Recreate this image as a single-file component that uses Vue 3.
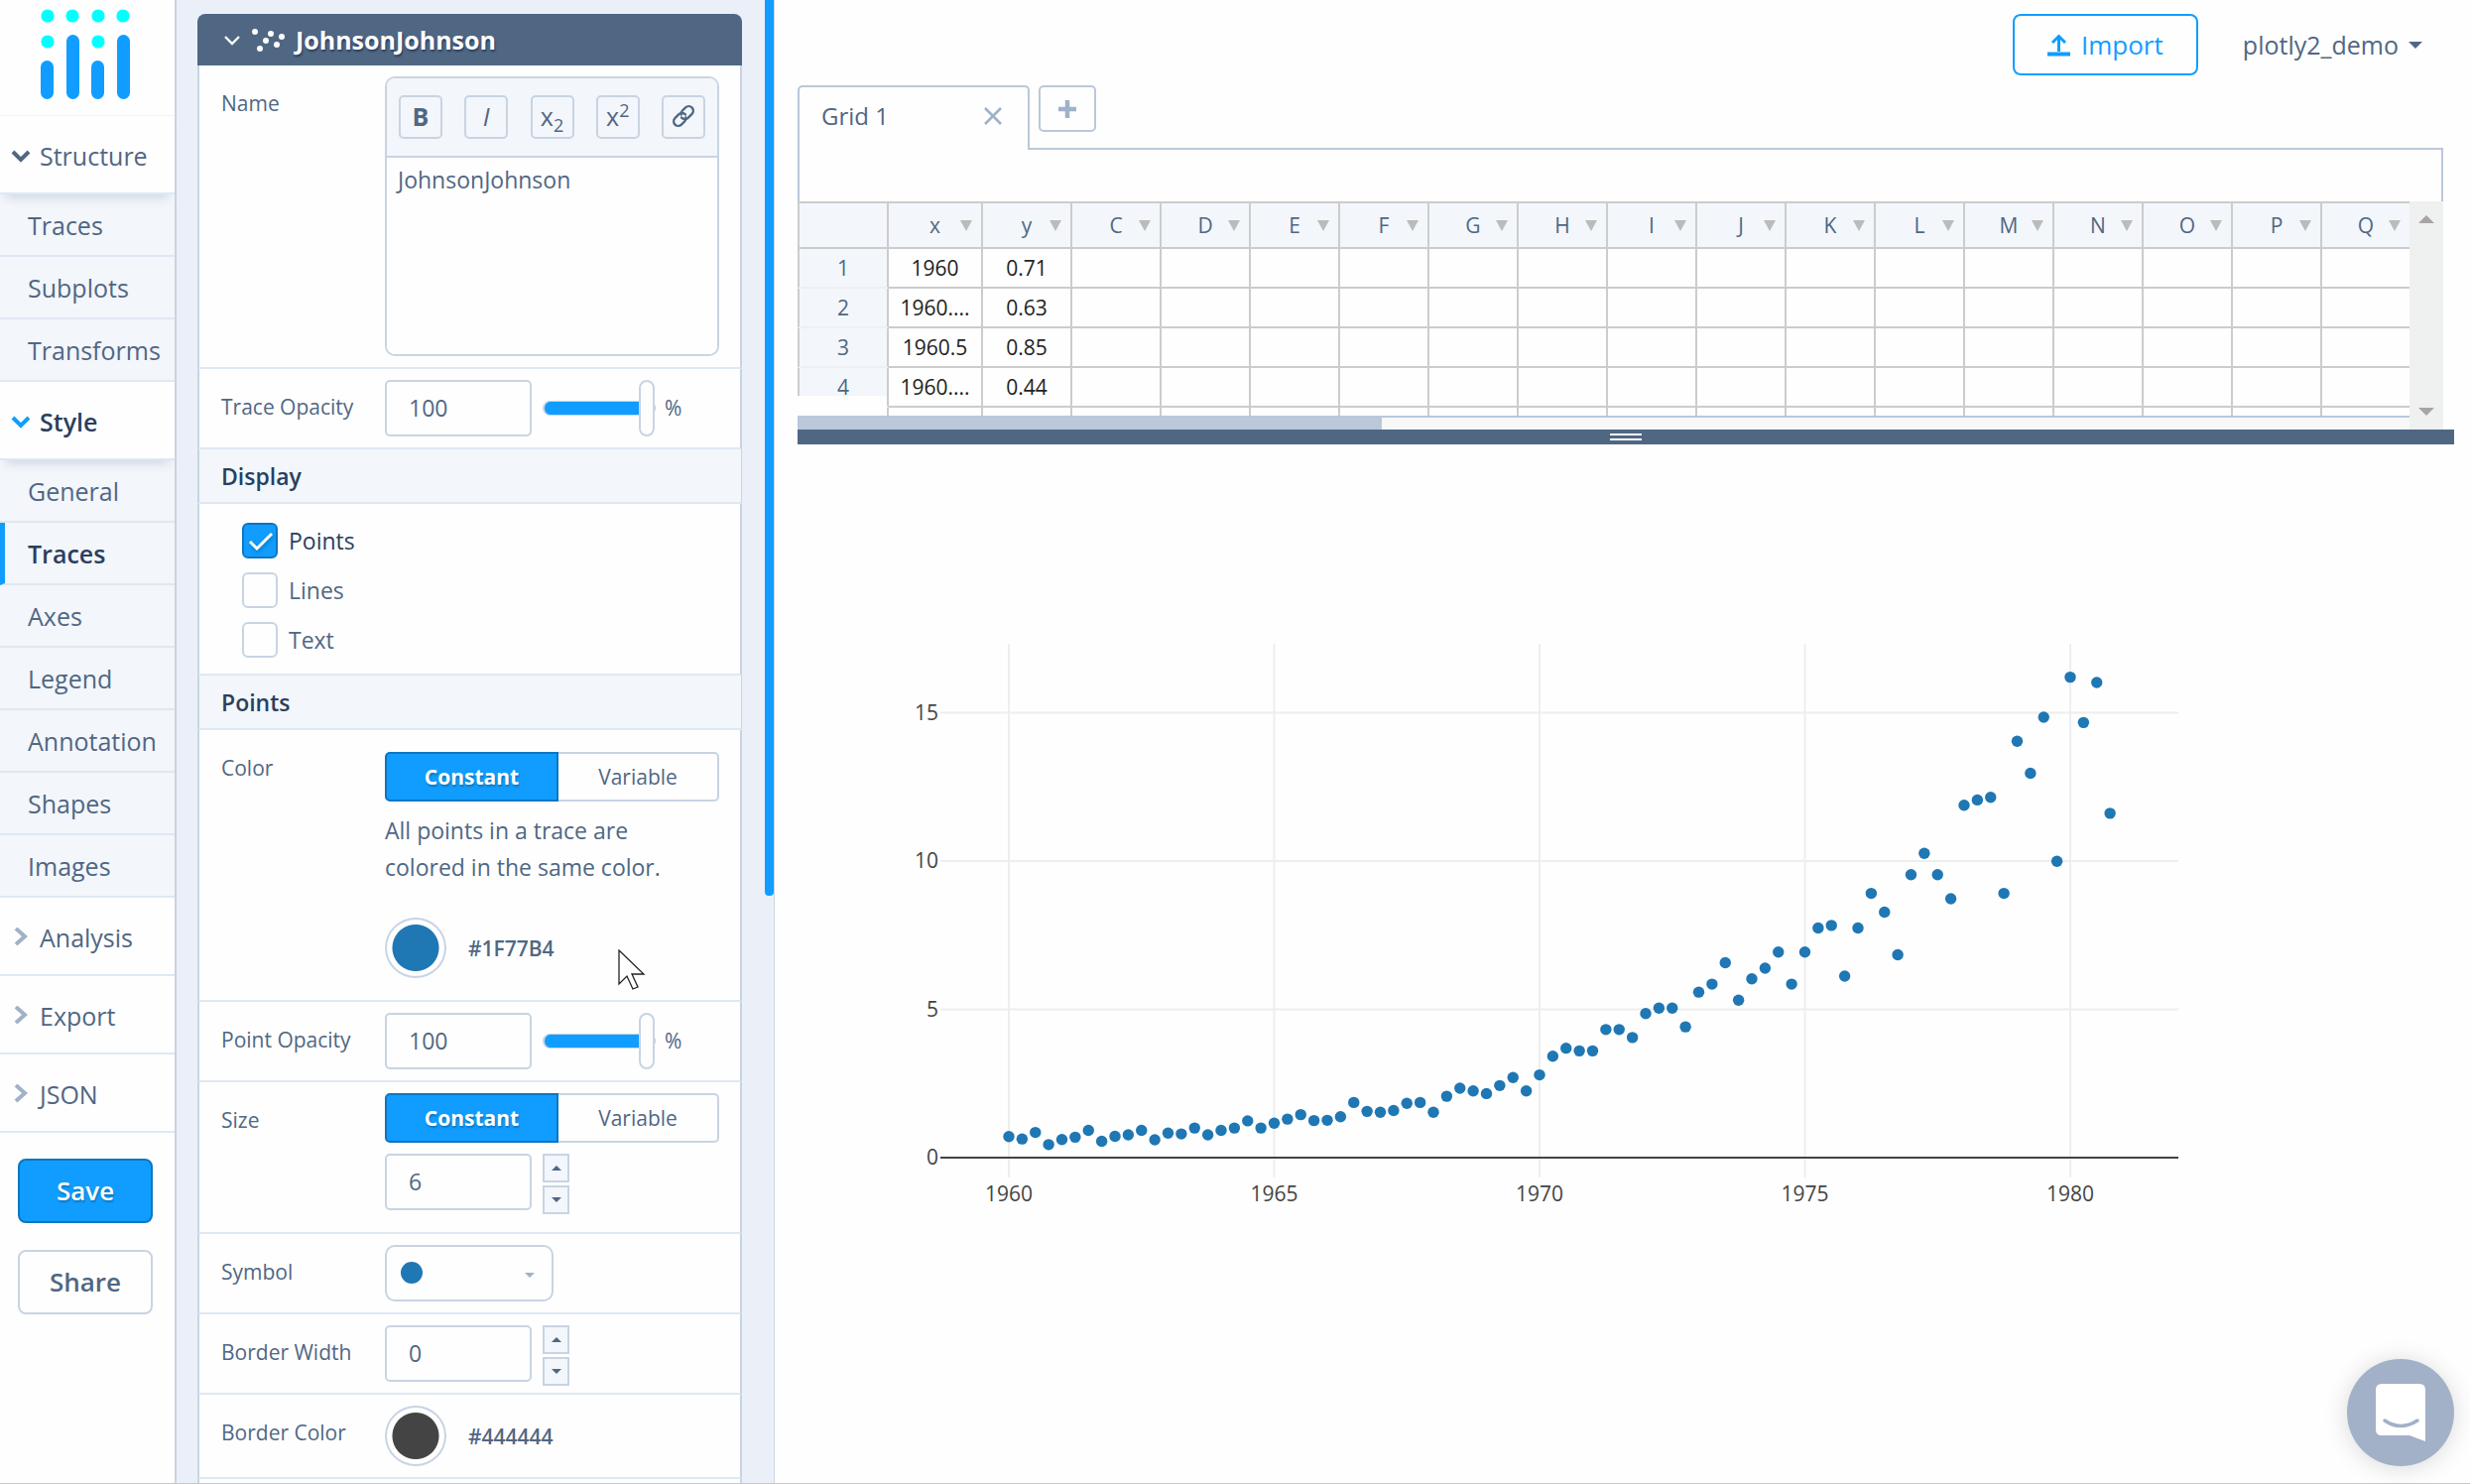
<script setup>
import { ref } from 'vue'

const structureItems = ['Traces', 'Subplots', 'Transforms']
const styleItems = ['General', 'Traces', 'Axes', 'Legend', 'Annotation', 'Shapes', 'Images']
const closedSections = ['Analysis', 'Export', 'JSON']

const traceName = ref('JohnsonJohnson')
const traceOpacity = ref(100)
const pointOpacity = ref(100)
const pointSize = ref('6')
const borderWidth = ref('0')
const display = ref([
  { name: 'Points', on: true },
  { name: 'Lines', on: false },
  { name: 'Text', on: false }
])

const columns = ['x', 'y', ...'CDEFGHIJKLMNOPQ']
const gridRows = [
  { label: '1', cells: ['1960', '0.71'] },
  { label: '2', cells: ['1960....', '0.63'] },
  { label: '3', cells: ['1960.5', '0.85'] },
  { label: '4', cells: ['1960....', '0.44'] },
  { label: '', cells: [] }
]

// Quarterly earnings per share, starting in the first quarter of 1960
const earnings = [
  0.71, 0.63, 0.85, 0.44, 0.61, 0.69, 0.92, 0.55, 0.72, 0.77, 0.92, 0.6,
  0.83, 0.8, 1, 0.77, 0.92, 1, 1.24, 1, 1.16, 1.3, 1.45, 1.25,
  1.26, 1.38, 1.86, 1.56, 1.53, 1.59, 1.83, 1.86, 1.53, 2.07, 2.34, 2.25,
  2.16, 2.43, 2.7, 2.25, 2.79, 3.42, 3.69, 3.6, 3.6, 4.32, 4.32, 4.05,
  4.86, 5.04, 5.04, 4.41, 5.58, 5.85, 6.57, 5.31, 6.03, 6.39, 6.93, 5.85,
  6.93, 7.74, 7.83, 6.12, 7.74, 8.91, 8.28, 6.84, 9.54, 10.26, 9.54, 8.73,
  11.88, 12.06, 12.15, 8.91, 14.04, 12.96, 14.85, 9.99, 16.2, 14.67, 16.02, 11.61
]
const xPos = (year) => 213 + (year - 1960) * 53.5
const yPos = (value) => 719 - value * 29.9
const points = earnings.map((v, i) => ({ x: xPos(1960 + i / 4), y: yPos(v) }))
const years = [1960, 1965, 1970, 1975, 1980]
const levels = [5, 10, 15]
</script>

<template>
  <div class="app">
    <nav class="sidebar">
      <div class="logo">
        <svg width="92" height="92" viewBox="0 0 92 92" aria-label="Plotly">
          <g fill="#0ff">
            <circle cx="7" cy="7" r="6.6" /><circle cx="32" cy="7" r="6.6" />
            <circle cx="58" cy="7" r="6.6" /><circle cx="83" cy="7" r="6.6" />
            <circle cx="7" cy="33" r="6.6" /><circle cx="58" cy="33" r="6.6" />
          </g>
          <g fill="#119dff">
            <rect x="0" y="52" width="13" height="39" rx="6.5" />
            <rect x="26" y="26" width="13" height="65" rx="6.5" />
            <rect x="51" y="52" width="13" height="39" rx="6.5" />
            <rect x="77" y="26" width="13" height="65" rx="6.5" />
          </g>
        </svg>
      </div>

      <button type="button" class="section open">
        <svg class="chev" width="20" height="20" viewBox="0 0 20 20"><path d="M2 6l8 8 8-8" /></svg>Structure
      </button>
      <a v-for="item in structureItems" :key="item" href="#" class="item">{{ item }}</a>

      <button type="button" class="section open current">
        <svg class="chev" width="20" height="20" viewBox="0 0 20 20"><path d="M2 6l8 8 8-8" /></svg>Style
      </button>
      <a v-for="item in styleItems" :key="item" href="#" class="item" :class="{ active: item === 'Traces' }">{{ item }}</a>

      <button v-for="name in closedSections" :key="name" type="button" class="section">
        <svg class="chev closed" width="20" height="20" viewBox="0 0 20 20"><path d="M5 1l9 8-9 8" /></svg>{{ name }}
      </button>

      <div class="actions">
        <button type="button" class="save">Save</button>
        <button type="button" class="share">Share</button>
      </div>
    </nav>

    <section class="panel">
      <div class="card">
        <button type="button" class="card-head">
          <svg width="63" height="26" viewBox="0 0 63 26">
            <path d="M2 10l7 7 7-7" fill="none" stroke="#fff" stroke-width="2.4" />
            <g fill="#fff">
              <circle cx="32" cy="5" r="3" /><circle cx="37" cy="22" r="3" /><circle cx="43" cy="14" r="3" />
              <circle cx="48" cy="7" r="3" /><circle cx="54" cy="18" r="3" /><circle cx="59" cy="10" r="3" />
            </g>
          </svg>
          JohnsonJohnson
        </button>

        <div class="row">
          <label class="name" for="trace-name">Name</label>
          <div class="field editor">
            <div class="tools">
              <button type="button" aria-label="Bold"><b>B</b></button>
              <button type="button" aria-label="Italic"><i>I</i></button>
              <button type="button" aria-label="Subscript"><span>x<sub>2</sub></span></button>
              <button type="button" aria-label="Superscript"><span>x<sup>2</sup></span></button>
              <button type="button" aria-label="Link">
                <svg width="24" height="24" viewBox="0 0 24 24">
                  <path d="M10 13.5a4.6 4.6 0 0 0 6.6.3l4-4a4.6 4.6 0 0 0-6.5-6.5l-3.2 3.2a4.6 4.6 0 0 0-1.2 4" />
                  <path d="M14 10.5a4.6 4.6 0 0 0-6.6-.3l-4 4a4.6 4.6 0 0 0 6.5 6.5l3.2-3.2a4.6 4.6 0 0 0 1.2-4" />
                </svg>
              </button>
            </div>
            <textarea id="trace-name" v-model="traceName" spellcheck="false"></textarea>
          </div>
        </div>

        <div class="row">
          <label class="name" for="trace-opacity">Trace Opacity</label>
          <div class="field inline">
            <input id="trace-opacity" v-model="traceOpacity" type="text" class="num" />
            <input v-model="traceOpacity" type="range" min="0" max="100" aria-label="Trace opacity slider" />
            <span class="unit">%</span>
          </div>
        </div>

        <h2>Display</h2>
        <div class="checks">
          <label v-for="opt in display" :key="opt.name" :class="{ on: opt.on }">
            <span class="box">
              <input v-model="opt.on" type="checkbox" />
              <svg v-if="opt.on" width="26" height="22" viewBox="0 0 26 22"><path d="M2 11l7 7L24 3" /></svg>
            </span>
            {{ opt.name }}
          </label>
        </div>

        <h2>Points</h2>
        <div class="row roomy">
          <span class="name">Color</span>
          <div class="field">
            <div class="toggle">
              <button type="button" class="on">Constant</button><button type="button">Variable</button>
            </div>
            <p>All points in a trace are colored in the same color.</p>
            <div class="color">
              <button type="button" class="swatch blue" aria-label="Point color"></button>#1F77B4
            </div>
          </div>
        </div>

        <div class="row">
          <label class="name" for="point-opacity">Point Opacity</label>
          <div class="field inline">
            <input id="point-opacity" v-model="pointOpacity" type="text" class="num" />
            <input v-model="pointOpacity" type="range" min="0" max="100" aria-label="Point opacity slider" />
            <span class="unit">%</span>
          </div>
        </div>

        <div class="row tall">
          <label class="name" for="point-size">Size</label>
          <div class="field">
            <div class="toggle">
              <button type="button" class="on">Constant</button><button type="button">Variable</button>
            </div>
            <div class="inline spaced">
              <input id="point-size" v-model="pointSize" type="text" class="num" />
              <div class="steps">
                <button type="button" aria-label="Increase size"><i class="tri up"></i></button>
                <button type="button" aria-label="Decrease size"><i class="tri down"></i></button>
              </div>
            </div>
          </div>
        </div>

        <div class="row">
          <label class="name" for="symbol">Symbol</label>
          <div class="field">
            <div class="symbol">
              <select id="symbol"><option value="circle" label=" "></option></select>
              <span class="dot"></span>
              <i class="tri down pale"></i>
            </div>
          </div>
        </div>

        <div class="row">
          <label class="name" for="border-width">Border Width</label>
          <div class="field inline">
            <input id="border-width" v-model="borderWidth" type="text" class="num" />
            <div class="steps">
              <button type="button" aria-label="Increase border width"><i class="tri up"></i></button>
              <button type="button" aria-label="Decrease border width"><i class="tri down"></i></button>
            </div>
          </div>
        </div>

        <div class="row">
          <span class="name">Border Color</span>
          <div class="field">
            <div class="color">
              <button type="button" class="swatch dark" aria-label="Border color"></button>#444444
            </div>
          </div>
        </div>
        <div class="row"><div class="field"></div></div>
      </div>
      <div class="scroll-thumb"></div>
      <svg class="cursor" width="28" height="42" viewBox="0 0 28 42">
        <path d="M1 1v34l8-8 6 13 5-2-6-13h12z" fill="#fff" stroke="#222" stroke-width="1.3" />
      </svg>
    </section>

    <main>
      <header>
        <button type="button" class="import">
          <svg width="23" height="23" viewBox="0 0 23 23" fill="none" stroke="#119dff">
            <path d="M11.5 18V3M5 9l6.5-6.5L18 9" stroke-width="3" />
            <path d="M0 20.5h23" stroke-width="4" />
          </svg>
          Import
        </button>
        <button type="button" class="user">plotly2_demo<i class="caret"></i></button>
      </header>

      <div class="tabs">
        <div class="tab">
          <span>Grid 1</span>
          <button type="button" aria-label="Close tab">
            <svg width="18" height="18" viewBox="0 0 18 18"><path d="M1 1l16 16M17 1L1 17" stroke="#9fb2c9" stroke-width="2.6" /></svg>
          </button>
        </div>
        <div class="tab-rest">
          <button type="button" class="add" aria-label="Add grid">
            <svg width="20" height="20" viewBox="0 0 20 20"><path d="M10 1v18M1 10h18" stroke="#9fb2c9" stroke-width="4.5" /></svg>
          </button>
        </div>
      </div>
      <div class="formula"></div>

      <div class="sheet">
        <div class="sheet-left">
          <div class="cells">
            <table>
              <thead>
                <tr>
                  <th></th>
                  <th v-for="c in columns" :key="c" :class="{ wide: c === 'x' }">
                    {{ c }}<span class="filter"></span>
                  </th>
                </tr>
              </thead>
              <tbody>
                <tr v-for="(r, i) in gridRows" :key="i">
                  <th>{{ r.label }}</th>
                  <td v-for="(c, j) in columns" :key="c">{{ r.cells[j] }}</td>
                </tr>
              </tbody>
            </table>
            <div class="cover"></div>
          </div>
          <div class="hbar"><div></div></div>
        </div>
        <div class="vbar">
          <i class="arrow up"></i>
          <i class="arrow down"></i>
        </div>
      </div>
      <div class="splitter"><span></span></div>

      <svg class="chart" viewBox="0 0 1686 1047" preserveAspectRatio="xMinYMin meet">
        <g stroke="#eee" stroke-width="2">
          <line v-for="y in years" :key="y" :x1="xPos(y)" :x2="xPos(y)" y1="201" y2="739" />
          <line v-for="l in levels" :key="l" x1="144" x2="1392" :y1="yPos(l)" :y2="yPos(l)" />
        </g>
        <line x1="144" x2="1392" y1="719" y2="719" stroke="#444" stroke-width="2" />
        <g fill="#1f77b4">
          <circle v-for="(p, i) in points" :key="i" :cx="p.x" :cy="p.y" r="5.7" />
        </g>
        <g class="ticks" text-anchor="middle">
          <text v-for="y in years" :key="y" :x="xPos(y)" y="763">{{ y }}</text>
        </g>
        <g class="ticks" text-anchor="end">
          <text v-for="l in [0, ...levels]" :key="l" x="142" :y="yPos(l) + 7">{{ l }}</text>
        </g>
      </svg>
    </main>

    <button type="button" class="chat" aria-label="Open chat">
      <svg width="52" height="60" viewBox="0 0 52 60">
        <path d="M7 1h38q6 0 6 6v52l-16-6H7q-6 0-6-6V7q0-6 6-6z" fill="#fff" />
        <path d="M10 38q16 11 33 0" fill="none" stroke="#a2b1c8" stroke-width="3.5" stroke-linecap="round" />
      </svg>
    </button>
  </div>
</template>

<style>
body { overflow: hidden; }
</style>

<style scoped>
.app, .app * { box-sizing: border-box; }
.app {
  display: flex;
  height: 100vh;
  overflow: hidden;
  background: #fefefe;
  border-bottom: 1px solid #c8c8c8;
  color: #506784;
  font-family: "Open Sans", "Noto Sans", sans-serif;
  font-size: 21px;
}
button, input, textarea, select { font: inherit; color: inherit; margin: 0; }
button { padding: 0; border: 0; background: none; }

.sidebar {
  flex: 0 0 178px;
  border-right: 2px solid #c8d4e3;
  font-size: 25px;
}
.logo {
  height: 117px;
  padding: 9px 0 0 41px;
  border-bottom: 1px solid #f3f3f6;
}
.logo svg { display: block; }
.section {
  display: flex;
  align-items: center;
  gap: 9px;
  width: 100%;
  height: 79px;
  padding: 2px 0 0 11px;
  border-bottom: 2px solid #dfe8f3;
  background: #fefefe;
}
.section.open {
  position: relative;
  z-index: 1;
  box-shadow: 0 9px 10px -6px #ccd4e3;
}
.chev { flex: none; fill: none; stroke: #506784; stroke-width: 4; }
.chev.closed { stroke: #a2b1c6; }
.section.current { color: #2a3f5f; font-weight: 600; }
.section.current .chev { stroke: #119dff; }
.item {
  display: flex;
  align-items: center;
  height: 63px;
  padding-left: 28px;
  border-bottom: 2px solid #dfe8f3;
  background: #f3f6fa;
  color: inherit;
  text-decoration: none;
}
.item.active {
  padding-left: 23px;
  border-left: 5px solid #119dff;
  color: #2a3f5f;
  font-weight: 600;
}
.actions {
  display: flex;
  flex-direction: column;
  gap: 27px;
  padding: 26px 22px 0 18px;
}
.actions button {
  height: 65px;
  padding-bottom: 2px;
  border-radius: 8px;
  font-size: 26px;
  font-weight: 600;
}
.actions .save {
  border: 2px solid #0d76bf;
  background: #119dff;
  color: #fff;
  text-shadow: 1px 2px 2px #0d76bf;
}
.actions .share { border: 2px solid #c8d4e3; }

.panel {
  position: relative;
  flex: 0 0 603px;
  padding: 14px 32px 0 21px;
  border-right: 1px solid #c8d4e3;
  background: #ebf0f8;
}
.card-head {
  display: flex;
  align-items: center;
  gap: 10px;
  width: 100%;
  height: 52px;
  padding-left: 26px;
  border-radius: 8px 8px 0 0;
  background: #506784;
  color: #fff;
  font-size: 25px;
  font-weight: 700;
  text-shadow: 1px 2px 2px #2a3f5f;
}
.row {
  display: flex;
  padding: 11px 21px 11px 22px;
  border: solid #c8d4e3;
  border-width: 0 2px;
  border-bottom: 2px solid #dfe8f3;
  background: #fefefe;
}
.row.roomy { padding-top: 22px; padding-bottom: 22px; }
.row.tall { padding-bottom: 22px; }
.row.roomy .name { margin-top: 0; }
.name { flex: 0 0 165px; margin-top: 11px; line-height: 32px; }
.field { flex: 1; min-width: 0; }
.inline { display: flex; align-items: center; gap: 11px; }
.spaced { margin-top: 11px; }

.editor { overflow: hidden; border: 2px solid #c8d4e3; border-radius: 10px; }
.tools {
  display: flex;
  justify-content: space-between;
  align-items: center;
  height: 80px;
  padding: 0 12px;
  border-bottom: 2px solid #c8d4e3;
  background: #f3f6fa;
}
.tools button {
  display: flex;
  align-items: center;
  justify-content: center;
  width: 44px;
  height: 44px;
  padding-bottom: 2px;
  border: 2px solid #c8d4e3;
  border-radius: 5px;
  font-size: 25px;
}
.tools svg { fill: none; stroke: #506784; stroke-width: 2.4; stroke-linecap: round; }
.tools span { line-height: 30px; }
.tools sub, .tools sup { font-size: 18px; line-height: 0; }
textarea {
  display: block;
  width: 100%;
  height: 198px;
  padding: 5px 11px;
  border: 0;
  outline: 0;
  resize: none;
  background: #fefefe;
  font-size: 23px;
  line-height: 34px;
}
.num {
  width: 148px;
  height: 57px;
  padding: 0 22px 2px;
  border: 2px solid #c8d4e3;
  border-radius: 5px;
  background: #fefefe;
  font-size: 23px;
}
input[type='range'] {
  width: 114px;
  height: 57px;
  margin-right: -2px;
  appearance: none;
  background: none;
}
input[type='range']::-webkit-slider-runnable-track {
  height: 15px;
  border: 1px solid #c8d4e3;
  border-left-width: 2px;
  border-radius: 8px;
  background: #119dff;
}
input[type='range']::-webkit-slider-thumb {
  appearance: none;
  box-sizing: border-box;
  width: 16px;
  height: 57px;
  margin-top: -22px;
  border: 2px solid #c8d4e3;
  border-radius: 8px;
  background: #fefefe;
}
.unit { padding-bottom: 2px; font-size: 21px; }

h2 {
  margin: 0;
  padding: 2px 22px 0;
  border: solid #c8d4e3;
  border-width: 0 1px 0 2px;
  border-bottom: 2px solid #dfe8f3;
  background: #f3f6fa;
  color: #2a3f5f;
  font-size: 23px;
  font-weight: 600;
  line-height: 51px;
}
.checks {
  display: flex;
  flex-direction: column;
  align-items: flex-start;
  gap: 14px;
  padding: 19px 43px 16px;
  border: solid #c8d4e3;
  border-width: 0 2px;
  border-bottom: 2px solid #dfe8f3;
  background: #fefefe;
  font-size: 23px;
}
.checks label { display: flex; align-items: center; gap: 11px; height: 36px; }
.checks .on { color: #2a3f5f; }
.box { position: relative; width: 36px; height: 36px; }
.box input {
  display: block;
  width: 36px;
  height: 36px;
  appearance: none;
  border: 2px solid #c8d4e3;
  border-radius: 6px;
}
.box input:checked { border-color: #0d76bf; background: #119dff; }
.box svg {
  position: absolute;
  left: 6px;
  top: 8px;
  fill: none;
  stroke: #fff;
  stroke-width: 3;
  filter: drop-shadow(1px 2px 2px #0d76bf);
}

.toggle { display: flex; height: 50px; }
.toggle button { flex: 1; border: 2px solid #c8d4e3; border-left: 0; border-radius: 0 5px 5px 0; }
.toggle .on {
  flex: 0 0 175px;
  border: 2px solid #0d76bf;
  border-radius: 5px 0 0 5px;
  background: #119dff;
  color: #fff;
  font-weight: 700;
  text-shadow: 1px 2px 2px #0d76bf;
}
.row p { margin: 11px 0 32px; padding-right: 22px; font-size: 23px; line-height: 37px; }
.color { display: flex; align-items: center; gap: 22px; font-weight: 600; }
.swatch { width: 62px; height: 61px; border: 2px solid #c8d4e3; border-radius: 50%; }
.swatch.blue { background: radial-gradient(circle closest-side, #1f77b4 23px, #fefefe 24px); }
.swatch.dark { background: radial-gradient(circle closest-side, #444 23px, #fefefe 24px); }

.steps { display: flex; flex-direction: column; gap: 3px; height: 57px; }
.steps button {
  display: flex;
  flex: none;
  align-items: center;
  justify-content: center;
  width: 27px;
  height: 29px;
  border: 2px solid #c8d4e3;
  background: #f3f6fa;
}
.tri { border: 5px solid transparent; }
.tri.up { border-top: 0; border-bottom-color: #506784; }
.tri.down { border-bottom: 0; border-top-color: #506784; }
.tri.pale { border-top-color: #a2b1c6; }
.symbol { position: relative; width: 170px; height: 57px; }
.symbol select {
  width: 100%;
  height: 57px;
  appearance: none;
  border: 2px solid #c8d4e3;
  border-radius: 10px;
  background: #fefefe;
}
.dot, .symbol .tri { position: absolute; pointer-events: none; }
.dot { left: 16px; top: 17px; width: 22px; height: 22px; border-radius: 50%; background: #1f77b4; }
.symbol .tri { right: 19px; top: 28px; }

.scroll-thumb {
  position: absolute;
  top: 0;
  right: 0;
  width: 9px;
  height: 903px;
  border-radius: 0 0 4px 4px;
  background: #119dff;
}
.cursor { position: absolute; left: 445px; top: 957px; }

main {
  display: flex;
  flex: 1;
  flex-direction: column;
  min-width: 0;
  padding-left: 23px;
}
header {
  display: flex;
  justify-content: flex-end;
  align-items: center;
  gap: 45px;
  height: 86px;
  padding: 4px 48px 0 0;
}
.import {
  display: flex;
  align-items: center;
  justify-content: center;
  gap: 11px;
  width: 187px;
  height: 62px;
  border: 2px solid #119dff;
  border-radius: 8px;
  color: #119dff;
  font-size: 26px;
}
.user { display: flex; align-items: center; gap: 10px; font-size: 25px; }
.caret { border: 7px solid transparent; border-top-color: #506784; border-bottom: 0; }

header, .tabs, .formula, .sheet, .splitter { flex: none; }
.tabs { display: flex; height: 65px; margin-right: 27px; }
.tab {
  display: flex;
  align-items: center;
  justify-content: space-between;
  width: 234px;
  padding: 0 26px 6px 22px;
  border: 2px solid #bac8da;
  border-bottom: 0;
  border-radius: 5px 5px 0 0;
  font-size: 24px;
}
.tab svg, .add svg { display: block; }
.tab-rest { flex: 1; padding-left: 9px; border-bottom: 2px solid #bac8da; }
.add {
  display: flex;
  align-items: center;
  justify-content: center;
  width: 58px;
  height: 47px;
  border: 2px solid #bac8da;
  border-radius: 5px;
}
.formula { height: 52px; margin-right: 27px; border: solid #bac8da; border-width: 0 2px; }
.sheet { display: flex; height: 230px; margin-right: 27px; }
.sheet-left { flex: 1; min-width: 0; }
.cells { position: relative; height: 216px; overflow: hidden; border-top: 2px solid #ccc; }
table { table-layout: fixed; width: 1627px; border-collapse: separate; border-spacing: 0; }
th, td {
  width: 90px;
  height: 40px;
  padding: 0;
  border: solid #ccc;
  border-width: 0 2px 2px 0;
  text-align: center;
  line-height: 30px;
}
td { color: #222; }
th { background: #f3f6fa; font-weight: 400; }
thead th { position: relative; height: 46px; }
th.wide { width: 95px; }
th:first-child { width: 92px; border-left-width: 2px; }
tbody th { border-bottom-color: #eef1f3; }
.filter {
  position: absolute;
  right: 9px;
  top: 17px;
  border: 6px solid transparent;
  border-top: 11px solid #bbb;
  border-bottom: 0;
}
.cover { position: absolute; left: 0; bottom: 0; width: 90px; height: 20px; background: #fefefe; }
.hbar { height: 14px; border-top: 2px solid #bac8da; background: #f8f8f8; }
.hbar div { width: 589px; height: 12px; background: #bac8da; }
.vbar {
  display: flex;
  flex-direction: column;
  justify-content: space-between;
  align-items: center;
  width: 34px;
  padding: 14px 0;
  background: #eff1f1;
}
.arrow { border: 8px solid transparent; }
.arrow.up { border-top: 0; border-bottom-color: #a8a4a4; }
.arrow.down { border-bottom: 0; border-top-color: #a8a4a4; }
.splitter {
  display: flex;
  justify-content: center;
  align-items: center;
  height: 15px;
  margin-right: 16px;
  background: #506784;
}
.splitter span { width: 32px; height: 7px; border: solid #fff; border-width: 2px 0; }
.chart { display: block; flex: 1; width: 100%; min-height: 0; }
.ticks { fill: #444; font-size: 21px; }

.chat {
  position: absolute;
  right: 16px;
  bottom: 18px;
  display: flex;
  align-items: center;
  justify-content: center;
  width: 108px;
  height: 108px;
  border-radius: 50%;
  background: #a2b1c8;
  box-shadow: 0 2px 24px #00000026;
}
</style>
